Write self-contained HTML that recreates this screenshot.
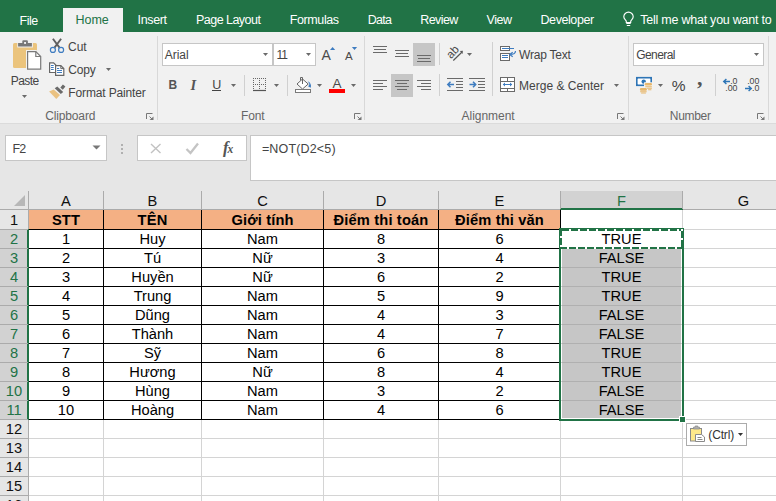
<!DOCTYPE html>
<html><head><meta charset="utf-8"><title>Excel</title><style>
html,body{margin:0;padding:0}
body{width:776px;height:501px;overflow:hidden;position:relative;background:#fff;font-family:"Liberation Sans",sans-serif;color:#444}
div,span,svg{position:absolute;box-sizing:border-box}
.t{white-space:nowrap;line-height:16px;font-size:12px}
.c{white-space:nowrap;line-height:19px;font-size:14.667px;text-align:center;color:#000;height:20px;padding-top:1px}
.b{font-weight:bold;letter-spacing:.15px}
.d{font-size:8.8px;line-height:8px;color:#444;letter-spacing:0}
.hl{background:#d4d4d4;height:1px}
.vl{background:#d4d4d4;width:1px}
.sep{background:#d8d8d8;width:1px}
.box{background:#fff;border:1px solid #c6c6c6}
.arr{width:0;height:0;border-left:3px solid transparent;border-right:3px solid transparent;border-top:3px solid #666}
</style></head><body>
<div style="left:0;top:0;width:776px;height:32px;background:#217346"></div>
<div style="left:63px;top:8px;width:60px;height:24px;background:#f1f1f1"></div>
<div style="left:0;top:32px;width:776px;height:92px;background:#f1f1f1"></div>
<div style="left:0;top:124px;width:776px;height:67px;background:#e6e6e6"></div>
<div style="left:0;top:123px;width:776px;height:1px;background:#dbdbdb"></div>
<div class="sep" style="left:157px;top:36px;height:84px"></div>
<div class="sep" style="left:364px;top:36px;height:84px"></div>
<div class="sep" style="left:628px;top:36px;height:84px"></div>
<div class="sep" style="left:768px;top:36px;height:84px"></div>
<div class="box" style="left:162px;top:43px;width:111px;height:23px"></div>
<div class="box" style="left:273px;top:43px;width:43px;height:23px"></div>
<div class="box" style="left:633px;top:43px;width:131px;height:23px"></div>
<div style="left:413px;top:43px;width:22px;height:23px;background:#c6c6c6"></div>
<div style="left:391px;top:74px;width:22px;height:23px;background:#c6c6c6"></div>
<div class="sep" style="left:244px;top:75px;height:21px;background:#d0d0d0"></div>
<div class="sep" style="left:287px;top:75px;height:21px;background:#d0d0d0"></div>
<div class="sep" style="left:439px;top:43px;height:22px;background:#d0d0d0"></div>
<div class="sep" style="left:439px;top:74px;height:22px;background:#d0d0d0"></div>
<div class="sep" style="left:492px;top:42px;height:54px;background:#d0d0d0"></div>
<div class="sep" style="left:715px;top:74px;height:22px;background:#d0d0d0"></div>
<svg style="left:106px;top:68px" width="5" height="3"><path d="M0 0h5l-2.500 3z" fill="#6a6a6a"/></svg>
<svg style="left:22px;top:95px" width="5" height="3"><path d="M0 0h5l-2.500 3z" fill="#6a6a6a"/></svg>
<svg style="left:263px;top:53px" width="5" height="3"><path d="M0 0h5l-2.500 3z" fill="#6a6a6a"/></svg>
<svg style="left:306px;top:53px" width="5" height="3"><path d="M0 0h5l-2.500 3z" fill="#6a6a6a"/></svg>
<svg style="left:231px;top:84px" width="5" height="3"><path d="M0 0h5l-2.500 3z" fill="#6a6a6a"/></svg>
<svg style="left:274px;top:84px" width="5" height="3"><path d="M0 0h5l-2.500 3z" fill="#6a6a6a"/></svg>
<svg style="left:317px;top:84px" width="5" height="3"><path d="M0 0h5l-2.500 3z" fill="#6a6a6a"/></svg>
<svg style="left:351px;top:84px" width="5" height="3"><path d="M0 0h5l-2.500 3z" fill="#6a6a6a"/></svg>
<svg style="left:467px;top:53px" width="5" height="3"><path d="M0 0h5l-2.500 3z" fill="#6a6a6a"/></svg>
<svg style="left:614px;top:84px" width="5" height="3"><path d="M0 0h5l-2.500 3z" fill="#6a6a6a"/></svg>
<svg style="left:754px;top:53px" width="5" height="3"><path d="M0 0h5l-2.500 3z" fill="#6a6a6a"/></svg>
<svg style="left:658px;top:84px" width="5" height="3"><path d="M0 0h5l-2.500 3z" fill="#6a6a6a"/></svg>
<div class="box" style="left:5px;top:135px;width:102px;height:26px"></div>
<div class="box" style="left:137px;top:135px;width:110px;height:26px"></div>
<div class="box" style="left:250px;top:135px;width:530px;height:46px"></div>
<svg style="left:92px;top:145px" width="9" height="5"><path d="M.5 .5h8l-4 4z" fill="#777"/></svg>
<div style="left:121px;top:143.5px;width:2px;height:2px;background:#b0b0b0"></div>
<div style="left:121px;top:147.5px;width:2px;height:2px;background:#b0b0b0"></div>
<div style="left:121px;top:151.5px;width:2px;height:2px;background:#b0b0b0"></div>
<div style="left:0;top:191px;width:776px;height:19px;background:#e6e6e6"></div>
<div style="left:0;top:191px;width:29px;height:310px;background:#e6e6e6"></div>
<div style="left:0;top:209px;width:776px;height:1px;background:#ababab"></div>
<div style="left:28px;top:191px;width:1px;height:310px;background:#ababab"></div>
<div style="left:561px;top:191px;width:121px;height:17px;background:#d2d2d2"></div>
<div style="left:560px;top:208px;width:123px;height:2px;background:#217346"></div>
<div style="left:0;top:229px;width:27px;height:190px;background:#d2d2d2"></div>
<div style="left:27px;top:229px;width:2px;height:191px;background:#217346"></div>
<svg style="left:0;top:191px" width="28" height="19"><path d="M25 4V15H14Z" fill="#b7b7b7"/></svg>
<div style="left:103px;top:191px;width:1px;height:18px;background:#ababab"></div>
<div style="left:201px;top:191px;width:1px;height:18px;background:#ababab"></div>
<div style="left:323px;top:191px;width:1px;height:18px;background:#ababab"></div>
<div style="left:438px;top:191px;width:1px;height:18px;background:#ababab"></div>
<div style="left:560px;top:191px;width:1px;height:18px;background:#ababab"></div>
<div style="left:682px;top:191px;width:1px;height:18px;background:#ababab"></div>
<div class="c" style="left:29px;top:191px;width:74px;color:#111">A</div>
<div class="c" style="left:104px;top:191px;width:97px;color:#111">B</div>
<div class="c" style="left:202px;top:191px;width:121px;color:#111">C</div>
<div class="c" style="left:324px;top:191px;width:114px;color:#111">D</div>
<div class="c" style="left:439px;top:191px;width:121px;color:#111">E</div>
<div class="c" style="left:561px;top:191px;width:121px;color:#217346">F</div>
<div class="c" style="left:683px;top:191px;width:121px;color:#111">G</div>
<div class="hl" style="left:29px;top:229px;width:747px"></div>
<div style="left:0;top:229px;width:28px;height:1px;background:#ababab"></div>
<div class="hl" style="left:29px;top:248px;width:747px"></div>
<div style="left:0;top:248px;width:28px;height:1px;background:#ababab"></div>
<div class="hl" style="left:29px;top:267px;width:747px"></div>
<div style="left:0;top:267px;width:28px;height:1px;background:#ababab"></div>
<div class="hl" style="left:29px;top:286px;width:747px"></div>
<div style="left:0;top:286px;width:28px;height:1px;background:#ababab"></div>
<div class="hl" style="left:29px;top:305px;width:747px"></div>
<div style="left:0;top:305px;width:28px;height:1px;background:#ababab"></div>
<div class="hl" style="left:29px;top:324px;width:747px"></div>
<div style="left:0;top:324px;width:28px;height:1px;background:#ababab"></div>
<div class="hl" style="left:29px;top:343px;width:747px"></div>
<div style="left:0;top:343px;width:28px;height:1px;background:#ababab"></div>
<div class="hl" style="left:29px;top:362px;width:747px"></div>
<div style="left:0;top:362px;width:28px;height:1px;background:#ababab"></div>
<div class="hl" style="left:29px;top:381px;width:747px"></div>
<div style="left:0;top:381px;width:28px;height:1px;background:#ababab"></div>
<div class="hl" style="left:29px;top:400px;width:747px"></div>
<div style="left:0;top:400px;width:28px;height:1px;background:#ababab"></div>
<div class="hl" style="left:29px;top:419px;width:747px"></div>
<div style="left:0;top:419px;width:28px;height:1px;background:#ababab"></div>
<div class="hl" style="left:29px;top:438px;width:747px"></div>
<div style="left:0;top:438px;width:28px;height:1px;background:#ababab"></div>
<div class="hl" style="left:29px;top:457px;width:747px"></div>
<div style="left:0;top:457px;width:28px;height:1px;background:#ababab"></div>
<div class="hl" style="left:29px;top:476px;width:747px"></div>
<div style="left:0;top:476px;width:28px;height:1px;background:#ababab"></div>
<div class="hl" style="left:29px;top:495px;width:747px"></div>
<div style="left:0;top:495px;width:28px;height:1px;background:#ababab"></div>
<div class="hl" style="left:29px;top:514px;width:747px"></div>
<div style="left:0;top:514px;width:28px;height:1px;background:#ababab"></div>
<div class="vl" style="left:103px;top:210px;height:291px"></div>
<div class="vl" style="left:201px;top:210px;height:291px"></div>
<div class="vl" style="left:323px;top:210px;height:291px"></div>
<div class="vl" style="left:438px;top:210px;height:291px"></div>
<div class="vl" style="left:560px;top:210px;height:291px"></div>
<div class="vl" style="left:682px;top:210px;height:291px"></div>
<div class="c" style="left:0;top:210px;width:28px;color:#111">1</div>
<div class="c" style="left:0;top:229px;width:28px;color:#217346">2</div>
<div class="c" style="left:0;top:248px;width:28px;color:#217346">3</div>
<div class="c" style="left:0;top:267px;width:28px;color:#217346">4</div>
<div class="c" style="left:0;top:286px;width:28px;color:#217346">5</div>
<div class="c" style="left:0;top:305px;width:28px;color:#217346">6</div>
<div class="c" style="left:0;top:324px;width:28px;color:#217346">7</div>
<div class="c" style="left:0;top:343px;width:28px;color:#217346">8</div>
<div class="c" style="left:0;top:362px;width:28px;color:#217346">9</div>
<div class="c" style="left:0;top:381px;width:28px;color:#217346">10</div>
<div class="c" style="left:0;top:400px;width:28px;color:#217346">11</div>
<div class="c" style="left:0;top:419px;width:28px;color:#111">12</div>
<div class="c" style="left:0;top:438px;width:28px;color:#111">13</div>
<div class="c" style="left:0;top:457px;width:28px;color:#111">14</div>
<div class="c" style="left:0;top:476px;width:28px;color:#111">15</div>
<div class="c" style="left:0;top:495px;width:28px;color:#111">16</div>
<div style="left:29px;top:210px;width:531px;height:19px;background:#f4b084"></div>
<div style="left:562px;top:249px;width:119px;height:169px;background:#c6c6c6"></div>
<div style="left:562px;top:267px;width:119px;height:1px;background:#b0b0b0"></div>
<div style="left:562px;top:286px;width:119px;height:1px;background:#b0b0b0"></div>
<div style="left:562px;top:305px;width:119px;height:1px;background:#b0b0b0"></div>
<div style="left:562px;top:324px;width:119px;height:1px;background:#b0b0b0"></div>
<div style="left:562px;top:343px;width:119px;height:1px;background:#b0b0b0"></div>
<div style="left:562px;top:362px;width:119px;height:1px;background:#b0b0b0"></div>
<div style="left:562px;top:381px;width:119px;height:1px;background:#b0b0b0"></div>
<div style="left:562px;top:400px;width:119px;height:1px;background:#b0b0b0"></div>
<div style="left:562px;top:419px;width:119px;height:1px;background:#b0b0b0"></div>
<div style="left:29px;top:229px;width:532px;height:1px;background:#000"></div>
<div style="left:29px;top:248px;width:532px;height:1px;background:#000"></div>
<div style="left:29px;top:267px;width:532px;height:1px;background:#000"></div>
<div style="left:29px;top:286px;width:532px;height:1px;background:#000"></div>
<div style="left:29px;top:305px;width:532px;height:1px;background:#000"></div>
<div style="left:29px;top:324px;width:532px;height:1px;background:#000"></div>
<div style="left:29px;top:343px;width:532px;height:1px;background:#000"></div>
<div style="left:29px;top:362px;width:532px;height:1px;background:#000"></div>
<div style="left:29px;top:381px;width:532px;height:1px;background:#000"></div>
<div style="left:29px;top:400px;width:532px;height:1px;background:#000"></div>
<div style="left:29px;top:419px;width:532px;height:1px;background:#000"></div>
<div style="left:103px;top:210px;width:1px;height:210px;background:#000"></div>
<div style="left:201px;top:210px;width:1px;height:210px;background:#000"></div>
<div style="left:323px;top:210px;width:1px;height:210px;background:#000"></div>
<div style="left:438px;top:210px;width:1px;height:210px;background:#000"></div>
<div style="left:560px;top:210px;width:1px;height:210px;background:#000"></div>
<div class="c b" style="left:29px;top:210px;width:74px">STT</div>
<div class="c b" style="left:104px;top:210px;width:97px">TÊN</div>
<div class="c b" style="left:202px;top:210px;width:121px">Giới tính</div>
<div class="c b" style="left:324px;top:210px;width:114px">Điểm thi toán</div>
<div class="c b" style="left:439px;top:210px;width:121px">Điểm thi văn</div>
<div class="c" style="left:29px;top:229px;width:74px">1</div>
<div class="c" style="left:104px;top:229px;width:97px">Huy</div>
<div class="c" style="left:202px;top:229px;width:121px">Nam</div>
<div class="c" style="left:324px;top:229px;width:114px">8</div>
<div class="c" style="left:439px;top:229px;width:121px">6</div>
<div class="c" style="left:561px;top:229px;width:121px">TRUE</div>
<div class="c" style="left:29px;top:248px;width:74px">2</div>
<div class="c" style="left:104px;top:248px;width:97px">Tú</div>
<div class="c" style="left:202px;top:248px;width:121px">Nữ</div>
<div class="c" style="left:324px;top:248px;width:114px">3</div>
<div class="c" style="left:439px;top:248px;width:121px">4</div>
<div class="c" style="left:561px;top:248px;width:121px">FALSE</div>
<div class="c" style="left:29px;top:267px;width:74px">3</div>
<div class="c" style="left:104px;top:267px;width:97px">Huyền</div>
<div class="c" style="left:202px;top:267px;width:121px">Nữ</div>
<div class="c" style="left:324px;top:267px;width:114px">6</div>
<div class="c" style="left:439px;top:267px;width:121px">2</div>
<div class="c" style="left:561px;top:267px;width:121px">TRUE</div>
<div class="c" style="left:29px;top:286px;width:74px">4</div>
<div class="c" style="left:104px;top:286px;width:97px">Trung</div>
<div class="c" style="left:202px;top:286px;width:121px">Nam</div>
<div class="c" style="left:324px;top:286px;width:114px">5</div>
<div class="c" style="left:439px;top:286px;width:121px">9</div>
<div class="c" style="left:561px;top:286px;width:121px">TRUE</div>
<div class="c" style="left:29px;top:305px;width:74px">5</div>
<div class="c" style="left:104px;top:305px;width:97px">Dũng</div>
<div class="c" style="left:202px;top:305px;width:121px">Nam</div>
<div class="c" style="left:324px;top:305px;width:114px">4</div>
<div class="c" style="left:439px;top:305px;width:121px">3</div>
<div class="c" style="left:561px;top:305px;width:121px">FALSE</div>
<div class="c" style="left:29px;top:324px;width:74px">6</div>
<div class="c" style="left:104px;top:324px;width:97px">Thành</div>
<div class="c" style="left:202px;top:324px;width:121px">Nam</div>
<div class="c" style="left:324px;top:324px;width:114px">4</div>
<div class="c" style="left:439px;top:324px;width:121px">7</div>
<div class="c" style="left:561px;top:324px;width:121px">FALSE</div>
<div class="c" style="left:29px;top:343px;width:74px">7</div>
<div class="c" style="left:104px;top:343px;width:97px">Sỹ</div>
<div class="c" style="left:202px;top:343px;width:121px">Nam</div>
<div class="c" style="left:324px;top:343px;width:114px">6</div>
<div class="c" style="left:439px;top:343px;width:121px">8</div>
<div class="c" style="left:561px;top:343px;width:121px">TRUE</div>
<div class="c" style="left:29px;top:362px;width:74px">8</div>
<div class="c" style="left:104px;top:362px;width:97px">Hương</div>
<div class="c" style="left:202px;top:362px;width:121px">Nữ</div>
<div class="c" style="left:324px;top:362px;width:114px">8</div>
<div class="c" style="left:439px;top:362px;width:121px">4</div>
<div class="c" style="left:561px;top:362px;width:121px">TRUE</div>
<div class="c" style="left:29px;top:381px;width:74px">9</div>
<div class="c" style="left:104px;top:381px;width:97px">Hùng</div>
<div class="c" style="left:202px;top:381px;width:121px">Nam</div>
<div class="c" style="left:324px;top:381px;width:114px">3</div>
<div class="c" style="left:439px;top:381px;width:121px">2</div>
<div class="c" style="left:561px;top:381px;width:121px">FALSE</div>
<div class="c" style="left:29px;top:400px;width:74px">10</div>
<div class="c" style="left:104px;top:400px;width:97px">Hoàng</div>
<div class="c" style="left:202px;top:400px;width:121px">Nam</div>
<div class="c" style="left:324px;top:400px;width:114px">4</div>
<div class="c" style="left:439px;top:400px;width:121px">6</div>
<div class="c" style="left:561px;top:400px;width:121px">FALSE</div>
<div style="left:559px;top:228px;width:125px;height:193px;border:2px solid #217346"></div>
<div style="left:560px;top:229px;width:123px;height:20px;background:#fff"></div>
<svg style="left:559px;top:228px" width="125" height="21" viewBox="559 228 125 21">
<g stroke="#217346" stroke-width="2" stroke-dasharray="7 2" fill="none">
<path d="M562 230H681"/><path d="M682 231V249"/><path d="M560 248H684"/><path d="M561 229V249"/>
</g>
<rect x="559" y="228" width="3" height="3" fill="#217346"/><rect x="681" y="247" width="3" height="2" fill="#217346"/>
</svg>
<div class="c" style="left:561px;top:229px;width:121px">TRUE</div>
<div style="left:679px;top:416px;width:7px;height:7px;background:#fff"></div>
<div style="left:680px;top:417px;width:5px;height:5px;background:#217346"></div>
<div style="left:686px;top:423px;width:61px;height:23px;background:#fff;border:1px solid #ababab"></div>
<svg style="left:738px;top:433px" width="6" height="4"><path d="M0 0h5l-2.500 3z" fill="#333"/></svg>
<span class="t" style="left:19.5px;top:12.8px;color:#fff;font-size:12.5px;letter-spacing:-0.49px">File</span>
<span class="t" style="left:75.5px;top:11.8px;color:#217346;font-size:12.5px;letter-spacing:-0.04px">Home</span>
<span class="t" style="left:137.5px;top:11.8px;color:#fff;font-size:12.5px;letter-spacing:-0.34px">Insert</span>
<span class="t" style="left:196.0px;top:11.8px;color:#fff;font-size:12.5px;letter-spacing:-0.53px">Page Layout</span>
<span class="t" style="left:289.8px;top:11.8px;color:#fff;font-size:12.5px;letter-spacing:-0.40px">Formulas</span>
<span class="t" style="left:367.8px;top:11.8px;color:#fff;font-size:12.5px;letter-spacing:-0.78px">Data</span>
<span class="t" style="left:420.3px;top:11.8px;color:#fff;font-size:12.5px;letter-spacing:-0.60px">Review</span>
<span class="t" style="left:486.5px;top:11.8px;color:#fff;font-size:12.5px;letter-spacing:-0.42px">View</span>
<span class="t" style="left:540.5px;top:11.8px;color:#fff;font-size:12.5px;letter-spacing:-0.42px">Developer</span>
<span class="t" style="left:640.3px;top:11.8px;color:#fff;font-size:12.5px;letter-spacing:-0.24px">Tell me what you want to</span>
<span class="t" style="left:68.0px;top:39.0px;color:#444;font-size:12px;letter-spacing:0.00px">Cut</span>
<span class="t" style="left:68.2px;top:62.0px;color:#444;font-size:12px;letter-spacing:-0.15px">Copy</span>
<span class="t" style="left:68.3px;top:85.0px;color:#444;font-size:12px;letter-spacing:-0.14px">Format Painter</span>
<span class="t" style="left:10.8px;top:73.0px;color:#444;font-size:12px;letter-spacing:-0.56px">Paste</span>
<span class="t" style="left:45.2px;top:108.0px;color:#666;font-size:12px;letter-spacing:-0.14px">Clipboard</span>
<span class="t" style="left:164.7px;top:47.0px;color:#444;font-size:12px;letter-spacing:-0.00px">Arial</span>
<span class="t" style="left:276.5px;top:47.0px;color:#444;font-size:12px;letter-spacing:-1.13px">11</span>
<span class="t" style="left:241.0px;top:108.0px;color:#666;font-size:12px;letter-spacing:-0.15px">Font</span>
<span class="t" style="left:519.0px;top:47.0px;color:#444;font-size:12px;letter-spacing:-0.21px">Wrap Text</span>
<span class="t" style="left:519.0px;top:78.0px;color:#444;font-size:12px;letter-spacing:0.02px">Merge &amp; Center</span>
<span class="t" style="left:461.5px;top:108.0px;color:#666;font-size:12px;letter-spacing:-0.02px">Alignment</span>
<span class="t" style="left:636.2px;top:47.0px;color:#444;font-size:12px;letter-spacing:-0.56px">General</span>
<span class="t" style="left:669.8px;top:108.0px;color:#666;font-size:12px;letter-spacing:-0.31px">Number</span>
<span class="t" style="left:671.8px;top:77.8px;color:#444;font-size:15.5px;letter-spacing:-0.90px">%</span>
<span class="t" style="left:12.5px;top:140.8px;color:#444;font-size:12.5px;letter-spacing:-0.80px">F2</span>
<span class="t" style="left:261.9px;top:140.8px;color:#444;font-size:12.5px;letter-spacing:0.16px">=NOT(D2&lt;5)</span>
<span class="t" style="left:708.3px;top:427.0px;color:#333;font-size:12px;letter-spacing:-0.16px">(Ctrl)</span>
<svg style="left:0;top:0" width="776" height="501" viewBox="0 0 776 501" fill="none">
<!-- bulb -->
<g stroke="#fff" stroke-width="1.150" fill="none">
<path d="M626.300 22.500v-1c0-1.300-2.500-2.200-2.500-4.700a4.700 4.700 0 0 1 9.400 0c0 2.500-2.500 3.400-2.500 4.700v1z"/>
<path d="M626.300 23.500h4.400M626.800 25.500h3.400"/>
</g>
<!-- paste icon -->
<rect x="13" y="43" width="24" height="25" rx="1.500" fill="#ebc47d"/>
<path d="M17.300 42.200h4.200v-1.600a1.200 1.200 0 0 1 1.200-1.200h4.800a1.200 1.200 0 0 1 1.200 1.200v1.600h4.200v5.200h-15.600z" fill="#f1f1f1"/>
<path d="M22.300 43v-1.800a1 1 0 0 1 1-1h3.600a1 1 0 0 1 1 1V43h4v3.600h-13.800V43z" fill="#787878"/>
<rect x="24.100" y="42" width="1.900" height="1.900" fill="#f1f1f1"/>
<path d="M26 50h10.400l5.800 5.800v15h-16.200z" fill="#f1f1f1"/>
<path d="M27.600 51.600h8.200l4.900 4.900v12.700h-13.100z" fill="#fff" stroke="#7a7a7a" stroke-width="1.200"/>
<path d="M35.800 51.600v4.900h4.900" fill="none" stroke="#7a7a7a" stroke-width="1.200"/>
<!-- scissors -->
<path d="M52.900 38.700L59.500 47.600M61.100 38.700L54.500 47.600" stroke="#5f5f5f" stroke-width="1.900"/>
<circle cx="52.900" cy="49.900" r="2.500" stroke="#3e7cc0" stroke-width="1.200"/>
<circle cx="61.100" cy="49.900" r="2.500" stroke="#3e7cc0" stroke-width="1.200"/>
<!-- copy -->
<path d="M49.600 62.800h4l2.200 2.200v7.500h-6.200z" fill="#fff" stroke="#666" stroke-width="1.200"/>
<path d="M55.600 65.600h5.200l3 3v6.800h-8.200z" fill="#fff" stroke="#666" stroke-width="1.200"/>
<path d="M60.800 65.600v3h3" stroke="#666" stroke-width="1"/>
<path d="M51 65.500h2.700M51 67.500h2.700M51 69.500h2.700M57 68.500h2.200M57 70.500h5M57 72.500h5" stroke="#3e7cc0" stroke-width="1"/>
<!-- format painter -->
<path d="M49.100 91.400l4.600-1.800 6.300 5.300-3.700 4z" fill="#eac282"/>
<path d="M54.700 88.300l2.600-1.700 5.900 5.400-2.400 2.100z" fill="#6a6a6a"/>
<path d="M60.300 87.500l2.600-3 2.500 2.100-2.600 3.100z" fill="#6a6a6a"/>
<!-- dialog launchers -->
<g transform="translate(0 0)" stroke="#777" stroke-width="1" fill="none">
<path d="M146.500 119v-5.500h6"/>
<path d="M149.500 116.500l3.500 3.500"/>
<path d="M153.500 116.500v3.500h-4z" fill="#777" stroke="none"/>
</g>
<g transform="translate(208 0)" stroke="#777" stroke-width="1" fill="none">
<path d="M146.500 119v-5.500h6"/>
<path d="M149.500 116.500l3.500 3.500"/>
<path d="M153.500 116.500v3.500h-4z" fill="#777" stroke="none"/>
</g>
<g transform="translate(471 0)" stroke="#777" stroke-width="1" fill="none">
<path d="M146.500 119v-5.500h6"/>
<path d="M149.500 116.500l3.500 3.500"/>
<path d="M153.500 116.500v3.500h-4z" fill="#777" stroke="none"/>
</g>
<g transform="translate(611 0)" stroke="#777" stroke-width="1" fill="none">
<path d="M146.500 119v-5.500h6"/>
<path d="M149.500 116.500l3.500 3.500"/>
<path d="M153.500 116.500v3.500h-4z" fill="#777" stroke="none"/>
</g>
<!-- grow/shrink font triangles -->
<path d="M330 50l2.600-3 2.600 3z" fill="#3e7cc0"/>
<path d="M351.900 47h5.200l-2.600 3z" fill="#3e7cc0"/>
<!-- U underline, border icon -->
<path d="M212 90.500h9" stroke="#444" stroke-width="1"/>
<g stroke="#666" stroke-width="1" stroke-dasharray="1 1">
<path d="M253 78.500h13M253 84.500h13"/>
<path d="M253.500 78v12M259.500 78v12M265.500 78v12"/>
</g>
<path d="M253 90.500h13" stroke="#555" stroke-width="1.200"/>
<!-- fill bucket -->
<path d="M302.500 79l5.700 5-5.700 5-5.500-5z" fill="#fff" stroke="#666" stroke-width="1"/>
<path d="M302.500 84v-6.500h-2v3" stroke="#666" stroke-width="1"/>
<path d="M307.800 81.200c2.600 1 3.800 3.800 3 6.600l-2.600-1.300 1.300-2.500z" fill="#3e7cc0"/>
<rect x="295.500" y="89.500" width="15" height="3" fill="#fff" stroke="#7a7a7a"/>
<!-- font colour bar -->
<rect x="329" y="89" width="16" height="4" fill="#ff0000"/>
<!-- alignment icons -->
<g stroke="#6a6a6a" stroke-width="1">
<path d="M373 46.500h14M374 49.500h12M373 52.500h14"/>
<path d="M395 50.500h14M396 53.500h12M395 56.500h14"/>
<path d="M417 55.500h14M418 58.500h12M417 61.500h14"/>
<path d="M373 80.500h14M373 83.500h10M373 86.500h14M373 89.500h10"/>
<path d="M395 80.500h14M397 83.500h10M395 86.500h14M397 89.500h10"/>
<path d="M417 80.500h14M421 83.500h10M417 86.500h14M421 89.500h10"/>
<!-- indent -->
<path d="M447 78.500h16M456 81.500h7M456 84.500h7M456 87.500h7M447 90.500h16"/>
<path d="M469 78.500h16M478 81.500h7M478 84.500h7M478 87.500h7M469 90.500h16"/>
</g>
<g stroke="#3e7cc0" stroke-width="1.500" fill="none">
<path d="M454 84.500h-6M450.500 81.800l-2.700 2.700 2.700 2.700"/>
<path d="M469.500 84.500h6M473 81.800l2.700 2.700-2.700 2.700"/>
</g>
<!-- orientation -->
<path d="M453.300 60.500l8.500-8.300" stroke="#555" stroke-width="1.200"/>
<path d="M459.800 51.100l3.100-.3-.3 3.100z" fill="#555"/>
<text transform="translate(450.900 59.200) rotate(-46)" font-family="Liberation Sans, sans-serif" font-size="11.500" fill="#4a4a4a" >ab</text>
<!-- wrap text -->
<rect x="500.500" y="46.500" width="9" height="4" fill="#fff" stroke="#6a6a6a"/>
<rect x="500.500" y="53.500" width="9" height="7" fill="#fff" stroke="#6a6a6a"/>
<path d="M502 55.500h6M502 57.500h6M502 48.500h12" stroke="#3e7cc0"/>
<path d="M515.500 51c0 2.600-2.200 3.500-5.500 3.500M512.700 52.200l-3 2.300 3 2.300" stroke="#3e7cc0" stroke-width="1.200"/>
<!-- merge -->
<rect x="500.500" y="77.500" width="14" height="14" fill="#fff" stroke="#6a6a6a"/>
<path d="M500.500 81.500h14M500.500 88.500h14M507.500 77.500v4M507.500 88.500v3" stroke="#6a6a6a"/>
<path d="M503 84.500h9" stroke="#3e7cc0" stroke-width="1"/><path d="M505 82.500l-2.200 2 2.200 2zM510 82.500l2.200 2-2.200 2z" fill="#3e7cc0"/>
<!-- currency -->
<rect x="636.800" y="77.700" width="14.400" height="7.600" fill="#fff" stroke="#2e75b6" stroke-width="1.600"/>
<path d="M636 77h3l-3 3zM652 77h-3l3 3zM636 86h3l-3-3z" fill="#2e75b6"/>
<circle cx="643.700" cy="81.600" r="2.200" fill="#2e75b6"/>
<rect x="644" y="82.300" width="8.600" height="4.800" fill="#f6f3ee"/>
<g fill="#e8b86d">
<rect x="644.800" y="83" width="7.200" height="2.500" rx="1.200"/><rect x="645.200" y="86.200" width="6.800" height="1" rx=".5"/><rect x="647" y="87.700" width="5" height="1" rx=".5"/><rect x="648" y="89.200" width="3.500" height="1" rx=".5"/>
<rect x="639.900" y="88.100" width="7" height="2.600" rx="1.200"/><rect x="640" y="91.200" width="6.800" height="1" rx=".5"/><rect x="641" y="92.500" width="5" height="1" rx=".5"/>
</g>
<!-- decimal arrows -->
<g stroke="#2e75b6" stroke-width="1.400" fill="none">
<path d="M730 81.500h-6.200M726.400 78.900l-2.700 2.600 2.700 2.600"/>
<path d="M745 88.500h6.200M748.600 85.900l2.700 2.600-2.700 2.600"/>
</g>
<!-- formula bar icons -->
<path d="M151 144l9.500 9M160.500 144l-9.500 9" stroke="#c2c2c2" stroke-width="1.400"/>
<path d="M186.500 149l4 4 7.500-9.500" stroke="#c4c4c4" stroke-width="2.300"/>
<!-- paste options icon -->
<rect x="690.500" y="428.500" width="11" height="12.500" fill="#ffe98a" stroke="#8a8a8a"/>
<path d="M693.500 429v-1.800h1.700v-1.200h2.600v1.200h1.700v1.800z" fill="#b0b0b0" stroke="#8a8a8a" stroke-width=".8"/>
<path d="M695.500 434.500h6l3 2.500v4.500h-9z" fill="#fff" stroke="#8a8a8a"/>
<path d="M697.500 437.500h4M697.500 439.500h5" stroke="#8a8a8a"/>
</svg>
<span class="t" style="left:321.500px;top:47px;font-size:14px;line-height:16px;color:#4a4a4a">A</span>
<span class="t" style="left:345px;top:48px;font-size:11.500px;line-height:16px;color:#4a4a4a">A</span>
<span class="t" style="left:332.500px;top:76.400px;font-size:13.500px;line-height:16px;color:#4a4a4a">A</span>
<span class="t b" style="left:168.500px;top:76.500px;font-size:12px;line-height:16px;color:#555">B</span>
<span class="t" style="left:190.500px;top:76.500px;font-size:14.500px;line-height:16px;color:#555;font-family:'Liberation Serif',serif;font-style:italic;font-weight:bold">I</span>
<span class="t" style="left:212.300px;top:76.500px;font-size:12.500px;line-height:16px;color:#444">U</span>
<span class="t" style="left:697px;top:67px;font-size:22px;line-height:22px;color:#555;font-family:'Liberation Serif',serif;font-weight:bold">,</span>
<span class="t" style="left:223px;top:139.500px;font-size:16.500px;line-height:16px;color:#555;font-family:'Liberation Serif',serif;font-style:italic;font-weight:bold;letter-spacing:-1px">f<span style="position:static;font-size:11.500px">x</span></span>
<span class="t d" style="right:38.500px;top:77px">.0</span>
<span class="t d" style="right:38.500px;top:84px">.00</span>
<span class="t d" style="right:16.600px;top:77px">.00</span>
<span class="t d" style="right:16.600px;top:84px">.0</span>

</body></html>
